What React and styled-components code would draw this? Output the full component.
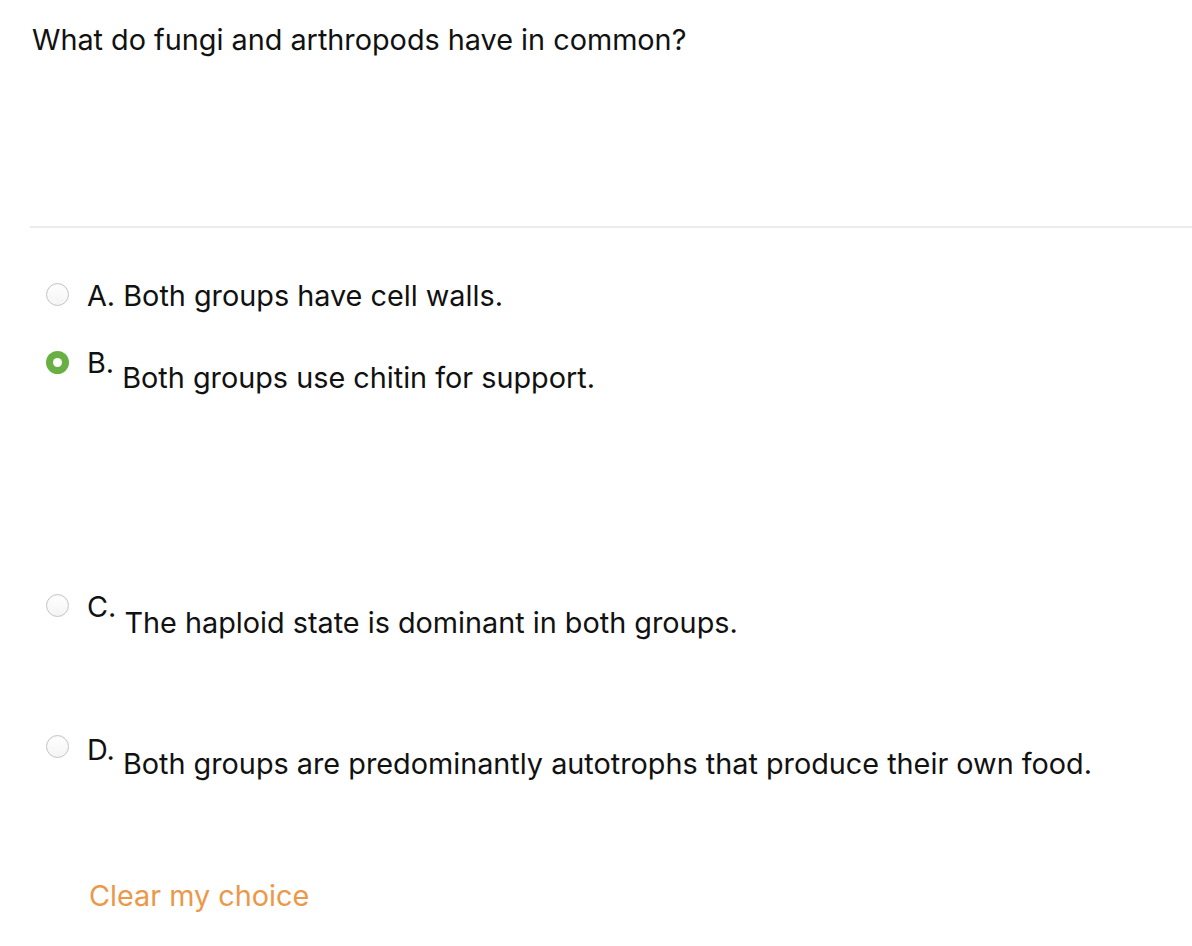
import React from "react";
import styled, { createGlobalStyle } from "styled-components";

const Global = createGlobalStyle`
  html, body { margin: 0; padding: 0; background: #ffffff; }
  body {
    font-family: Inter, "Noto Sans", "Liberation Sans", sans-serif;
    color: #111111;
    -webkit-font-smoothing: antialiased;
  }
`;

const Page = styled.div`
  width: 1192px;
  min-height: 946px;
  padding-left: 30px;
  box-sizing: border-box;
`;

const Question = styled.div`
  padding: 21px 0 0 2px;
  font-size: 28.8px;
  line-height: 38px;
  height: 226px;
  box-sizing: border-box;
`;

const Divider = styled.hr`
  margin: 0;
  border: 0;
  height: 2px;
  background: #ececf0;
`;

const Options = styled.div`
  display: flex;
  flex-direction: column;
  padding-top: 49px;
`;

const Option = styled.label`
  display: flex;
  align-items: flex-start;
  font-size: 28.8px;
  line-height: 38px;
  margin-bottom: ${(p) => p.$after}px;
  cursor: pointer;
`;

const Radio = styled.span`
  flex: none;
  width: 23px;
  height: 23px;
  margin: ${(p) => p.$top}px 18px 0 16px;
  border-radius: 50%;
  box-sizing: border-box;
  position: relative;
  background: ${(p) => (p.$checked ? "#68b043" : "linear-gradient(#ffffff, #f4f4f4)")};
  border: ${(p) => (p.$checked ? "none" : "1px solid #c4c4c4")};
  box-shadow: ${(p) => (p.$checked ? "none" : "inset 0 1px 1px rgba(0,0,0,0.04)")};
  &::after {
    content: "";
    display: ${(p) => (p.$checked ? "block" : "none")};
    position: absolute;
    left: 50%;
    top: 50%;
    width: 9px;
    height: 9px;
    margin: -4.5px 0 0 -4.5px;
    border-radius: 50%;
    background: #ffffff;
  }
`;

const Number = styled.span`
  flex: none;
  white-space: pre;
`;

const Answer = styled.div`
  padding-top: ${(p) => p.$offset}px;
`;

const ClearLink = styled.a`
  display: inline-block;
  margin-left: 59px;
  font-size: 28.8px;
  line-height: 38px;
  color: #eb9849;
  text-decoration: none;
  cursor: pointer;
`;

const options = [
  { n: "A.", text: "Both groups have cell walls.", offset: 0, top: 6, after: 29 },
  { n: "B.", text: "Both groups use chitin for support.", offset: 15, top: 6.5, after: 191, checked: true },
  { n: "C.", text: "The haploid state is dominant in both groups.", offset: 16, top: 6, after: 89 },
  { n: "D.", text: "Both groups are predominantly autotrophs that produce their own food.", offset: 14, top: 3.5, after: 94 },
];

export default function App() {
  return (
    <>
      <Global />
      <Page>
        <Question>What do fungi and arthropods have in common?</Question>
        <Divider />
        <Options>
          {options.map((o) => (
            <Option key={o.n} $after={o.after}>
              <Radio $checked={o.checked} $top={o.top} />
              <Number>{o.n} </Number>
              <Answer $offset={o.offset}>{o.text}</Answer>
            </Option>
          ))}
          <div>
            <ClearLink>Clear my choice</ClearLink>
          </div>
        </Options>
      </Page>
    </>
  );
}
